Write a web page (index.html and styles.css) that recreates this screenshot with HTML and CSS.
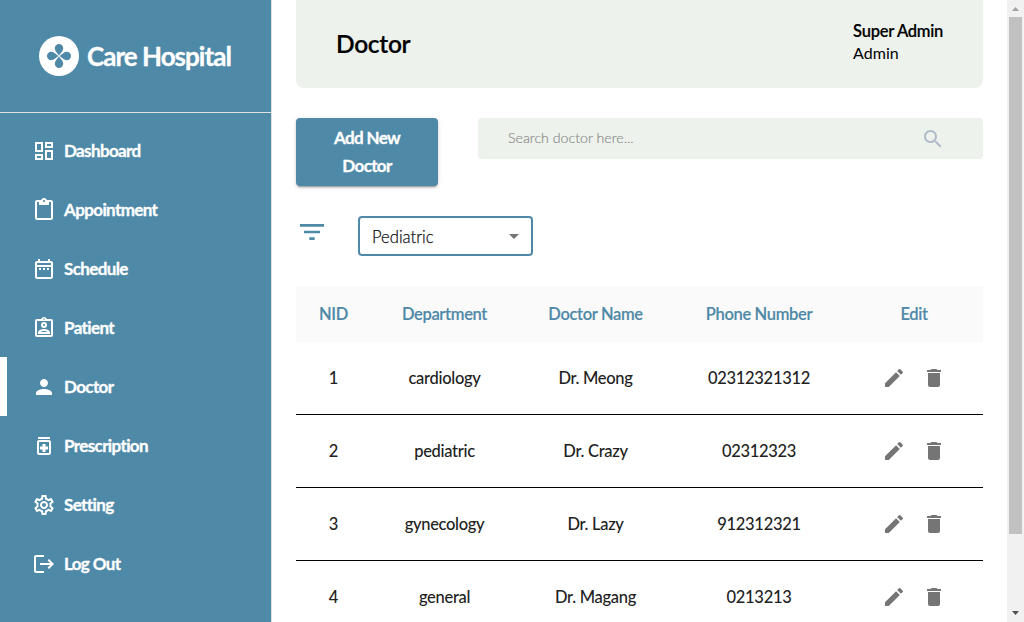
FILE: index.html
```html
<!DOCTYPE html>
<html lang="en">
<head>
<meta charset="utf-8">
<title>Care Hospital</title>
<link rel="stylesheet" href="styles.css">
</head>
<body>
<svg class="defs" aria-hidden="true">
  <symbol id="edit" viewBox="0 0 24 24"><path d="M3 17.25V21h3.75L17.81 9.94l-3.75-3.75L3 17.25zM20.71 7.04c.39-.39.39-1.02 0-1.41l-2.34-2.34a.9959.9959 0 0 0-1.41 0l-1.83 1.83 3.75 3.75 1.83-1.83z"/></symbol>
  <symbol id="trash" viewBox="0 0 24 24"><path d="M6 19c0 1.1.9 2 2 2h8c1.1 0 2-.9 2-2V7H6v12zM19 4h-3.5l-1-1h-5l-1 1H5v2h14V4z"/></symbol>
</svg>
<div class="app">
  <aside class="sidebar">
    <div class="brand">
      <svg class="logo" viewBox="0 0 40 40">
        <circle cx="20" cy="20" r="20" fill="#fff"/>
        <g fill="#4f89a8">
          <path id="petal" d="M20 19.500L16.900 15.500C16.200 14.600 15.800 13.500 15.800 12.200a4.200 4.200 0 0 1 8.400 0C24.200 13.500 23.800 14.600 23.100 15.500z"/>
          <use href="#petal" transform="rotate(90 20 20)"/>
          <use href="#petal" transform="rotate(180 20 20)"/>
          <use href="#petal" transform="rotate(270 20 20)"/>
        </g>
      </svg>
      <span class="brand-name">Care Hospital</span>
    </div>
    <nav class="nav">
      <a class="item"><svg class="icon" viewBox="0 0 24 24"><path d="M19 5v2h-4V5h4M9 5v6H5V5h4m10 8v6h-4v-6h4M9 17v2H5v-2h4M21 3h-8v6h8V3zM11 3H3v10h8V3zm10 8h-8v10h8V11zm-10 4H3v6h8v-6z"/></svg><span>Dashboard</span></a>
      <a class="item"><svg class="icon" viewBox="0 0 24 24"><path d="M19 2h-4.180C14.400.84 13.300 0 12 0S9.600.84 9.180 2H5c-1.100 0-2 .9-2 2v16c0 1.100.9 2 2 2h14c1.100 0 2-.9 2-2V4c0-1.100-.9-2-2-2zm-7 0c.55 0 1 .45 1 1s-.45 1-1 1-1-.45-1-1 .45-1 1-1zm7 18H5V4h2v3h10V4h2v16z"/></svg><span>Appointment</span></a>
      <a class="item"><svg class="icon" viewBox="0 0 24 24"><path d="M7 11h2v2H7v-2zm14-5v14c0 1.1-.9 2-2 2H5c-1.11 0-2-.9-2-2l.01-14c0-1.1.88-2 1.99-2h1V2h2v2h8V2h2v2h1c1.100 0 2 .9 2 2zM5 8h14V6H5v2zm14 12V10H5v10h14zm-4-7h2v-2h-2v2zm-4 0h2v-2h-2v2z"/></svg><span>Schedule</span></a>
      <a class="item"><svg class="icon" viewBox="0 0 24 24"><path fill-rule="evenodd" d="M5 3h4.180a3 3 0 0 1 5.640 0H19a2 2 0 0 1 2 2v14a2 2 0 0 1-2 2H5a2 2 0 0 1-2-2V5a2 2 0 0 1 2-2zm0 2v14h14V5zm7-2.750a.75.75 0 1 0 0 1.500.75.75 0 0 0 0-1.500zM12 6a3 3 0 1 1 0 6 3 3 0 0 1 0-6zm0 2a1 1 0 1 0 0 2 1 1 0 0 0 0-2zM6 16.470C6 13.970 9.970 12.890 12 12.890s6 1.080 6 3.580V18H6zm2.310-.47h7.380c-.69-.56-2.380-1.120-3.690-1.120S8.990 15.440 8.310 16z"/></svg><span>Patient</span></a>
      <a class="item active"><svg class="icon" viewBox="0 0 24 24"><path d="M12 12c2.210 0 4-1.790 4-4s-1.790-4-4-4-4 1.790-4 4 1.790 4 4 4zm0 2c-2.670 0-8 1.340-8 4v2h16v-2c0-2.660-5.330-4-8-4z"/></svg><span>Doctor</span></a>
      <a class="item"><svg class="icon" viewBox="0 0 24 24"><path d="M6 3h12v2H6zm11 3H7c-1.100 0-2 .9-2 2v11c0 1.100.9 2 2 2h10c1.100 0 2-.9 2-2V8c0-1.100-.9-2-2-2zm0 13H7V8h10v11zm-6.500-1h3v-2.500H16v-3h-2.500V10h-3v2.500H8v3h2.500z"/></svg><span>Prescription</span></a>
      <a class="item"><svg class="icon" viewBox="0 0 24 24"><path d="M19.43 12.98c.04-.32.07-.64.07-.98 0-.34-.03-.66-.07-.98l2.110-1.650c.19-.15.24-.42.12-.64l-2-3.460c-.09-.16-.26-.25-.44-.25-.06 0-.12.01-.17.03l-2.490 1c-.52-.4-1.080-.73-1.690-.98l-.38-2.650C14.460 2.180 14.250 2 14 2h-4c-.25 0-.46.18-.49.42l-.38 2.650c-.61.25-1.170.59-1.690.98l-2.490-1c-.06-.02-.12-.03-.18-.03-.17 0-.34.09-.43.25l-2 3.460c-.13.22-.07.49.12.64l2.110 1.650c-.04.32-.07.65-.07.98 0 .33.03.66.07.98l-2.110 1.650c-.19.15-.24.42-.12.64l2 3.460c.09.16.26.25.44.25.06 0 .12-.01.17-.03l2.490-1c.52.4 1.080.73 1.690.98l.38 2.650c.03.24.24.42.49.42h4c.25 0 .46-.18.49-.42l.38-2.650c.61-.25 1.170-.59 1.690-.98l2.490 1c.06.02.12.03.18.03.17 0 .34-.09.43-.25l2-3.460c.12-.22.07-.49-.12-.64l-2.110-1.650zm-1.980-1.710c.04.31.05.52.05.73 0 .21-.02.43-.05.73l-.14 1.130.89.7 1.080.84-.7 1.210-1.270-.51-1.040-.42-.9.68c-.43.32-.84.56-1.250.73l-1.060.43-.16 1.130-.2 1.350h-1.400l-.19-1.350-.16-1.130-1.060-.43c-.43-.18-.83-.41-1.230-.71l-.91-.7-1.060.43-1.270.51-.7-1.210 1.080-.84.89-.7-.14-1.130c-.03-.31-.05-.54-.05-.74s.02-.43.05-.73l.14-1.130-.89-.7-1.080-.84.7-1.210 1.270.51 1.040.42.9-.68c.43-.32.84-.56 1.250-.73l1.060-.43.16-1.130.2-1.350h1.390l.19 1.350.16 1.130 1.060.43c.43.18.83.41 1.230.71l.91.7 1.060-.43 1.270-.51.7 1.210-1.070.85-.89.7.14 1.130zM12 8c-2.210 0-4 1.790-4 4s1.790 4 4 4 4-1.790 4-4-1.790-4-4-4zm0 6c-1.100 0-2-.9-2-2s.9-2 2-2 2 .9 2 2-.9 2-2 2z"/></svg><span>Setting</span></a>
      <a class="item"><svg class="icon" viewBox="0 0 24 24"><path d="m17 7-1.410 1.410L18.170 11H8v2h10.170l-2.580 2.580L17 17l5-5zM4 5h8V3H4c-1.100 0-2 .9-2 2v14c0 1.100.9 2 2 2h8v-2H4V5z"/></svg><span>Log Out</span></a>
    </nav>
  </aside>
  <main class="main">
    <header class="header">
      <h1 class="title">Doctor</h1>
      <div class="user"><span class="user-name">Super Admin</span><span class="user-role">Admin</span></div>
    </header>
    <div class="actions">
      <button class="add"><span>Add New</span><span>Doctor</span></button>
      <div class="search"><span class="placeholder">Search doctor here...</span><svg class="icon" viewBox="0 0 24 24"><path d="M15.500 14h-.79l-.28-.27C15.410 12.590 16 11.110 16 9.500 16 5.910 13.090 3 9.500 3S3 5.910 3 9.500 5.910 16 9.500 16c1.610 0 3.090-.59 4.230-1.570l.27.28v.79l5 4.990L20.490 19l-4.990-5zm-6 0C7.010 14 5 11.990 5 9.500S7.010 5 9.500 5 14 7.010 14 9.500 11.990 14 9.500 14z"/></svg></div>
    </div>
    <div class="filters">
      <svg class="filter-icon" viewBox="0 0 24 24"><path d="M10 18h4v-2h-4v2zM3 6v2h18V6H3zm3 7h12v-2H6v2z"/></svg>
      <div class="select"><span>Pediatric</span><svg class="icon" viewBox="0 0 24 24"><path d="m7 10 5 5 5-5z"/></svg></div>
    </div>
    <div class="table">
      <div class="row head"><span>NID</span><span>Department</span><span>Doctor Name</span><span>Phone Number</span><span>Edit</span></div>
      <div class="row"><span>1</span><span>cardiology</span><span>Dr. Meong</span><span>02312321312</span><div class="tools"><svg class="icon"><use href="#edit"/></svg><svg class="icon"><use href="#trash"/></svg></div></div>
      <div class="row"><span>2</span><span>pediatric</span><span>Dr. Crazy</span><span>02312323</span><div class="tools"><svg class="icon"><use href="#edit"/></svg><svg class="icon"><use href="#trash"/></svg></div></div>
      <div class="row"><span>3</span><span>gynecology</span><span>Dr. Lazy</span><span>912312321</span><div class="tools"><svg class="icon"><use href="#edit"/></svg><svg class="icon"><use href="#trash"/></svg></div></div>
      <div class="row"><span>4</span><span>general</span><span>Dr. Magang</span><span>0213213</span><div class="tools"><svg class="icon"><use href="#edit"/></svg><svg class="icon"><use href="#trash"/></svg></div></div>
    </div>
  </main>
  <div class="scrollbar">
    <svg class="arrow up" viewBox="0 0 17 17"><path d="M5 11h7L8.500 7z"/></svg>
    <div class="thumb"></div>
    <svg class="arrow down" viewBox="0 0 17 17"><path d="M5 6h7L8.500 10z"/></svg>
  </div>
</div>
</body>
</html>
```
FILE: styles.css
```css
* { box-sizing: border-box; }
body {
  margin: 0;
  height: 622px;
  overflow: hidden;
  font-family: Lato, sans-serif;
  font-size: 16px;
  color: #000;
  background: #fff;
}
.defs { display: none; }
.icon { width: 24px; height: 24px; flex: none; fill: currentColor; }
.app { display: flex; height: 622px; overflow: hidden; }

.sidebar {
  flex: none;
  width: 272px;
  background: #4f89a8;
  border-right: 1px solid #e0e0e0;
  color: #fff;
}
.brand {
  display: flex;
  align-items: center;
  gap: 8px;
  height: 113px;
  padding-left: 39px;
  border-bottom: 1px solid #e0e0e0;
}
.logo { width: 40px; height: 40px; }
.brand-name { font-size: 26px; font-weight: 700; letter-spacing: -0.98px; -webkit-text-stroke: 0.3px; }
.nav { padding-top: 8px; }
.item {
  display: flex;
  align-items: center;
  gap: 8px;
  height: 59px;
  padding-left: 25px;
  border-left: 7px solid transparent;
  font-size: 17px;
  font-weight: 700;
  letter-spacing: -0.62px;
  -webkit-text-stroke: 0.3px;
}
.item.active { border-left-color: #fff; }

.main { flex: 1; min-width: 0; padding: 0 24px; }
.header {
  display: flex;
  align-items: center;
  justify-content: space-between;
  height: 88px;
  padding: 0 40px 1px;
  background: #edf2ec;
  border-radius: 0 0 8px 8px;
}
.title { margin: 0; font-size: 24.5px; font-weight: 600; letter-spacing: -0.3px; -webkit-text-stroke: 0.2px; }
.user { display: flex; flex-direction: column; padding-bottom: 4px; line-height: 22px; }
.user-name { font-size: 16.5px; font-weight: 600; letter-spacing: -0.28px; -webkit-text-stroke: 0.15px; }
.user-role { font-weight: 400; }

.actions {
  display: flex;
  align-items: flex-start;
  gap: 40px;
  margin-top: 30px;
}
.add {
  display: flex;
  flex-direction: column;
  align-items: center;
  justify-content: center;
  width: 142px;
  height: 68px;
  padding: 0;
  border: 0;
  border-radius: 4px;
  background: #4f89a8;
  color: #fff;
  font: 700 17px/28px Lato, sans-serif;
  letter-spacing: -0.62px;
  -webkit-text-stroke: 0.3px;
  box-shadow: 0 3px 1px -2px rgba(0,0,0,.2), 0 2px 2px rgba(0,0,0,.14), 0 1px 5px rgba(0,0,0,.12);
}
.search {
  flex: 1;
  display: flex;
  align-items: center;
  justify-content: space-between;
  height: 41px;
  padding: 0 38px 0 30px;
  border-radius: 4px;
  background: #edf2ec;
  color: #b0bbcb;
}
.placeholder { padding-bottom: 2px; color: #888; font-size: 14.2px; font-weight: 300; -webkit-text-stroke: 0.15px; }

.filters { display: flex; gap: 30px; margin-top: 30px; }
.filter-icon { width: 32px; height: 32px; fill: #4f89a8; }
.select {
  display: flex;
  align-items: center;
  justify-content: space-between;
  width: 175px;
  height: 40px;
  padding: 0 5px 0 12px;
  border: 2px solid #4f89a8;
  border-radius: 4px;
  color: #111;
  font-size: 16.6px;
  font-weight: 300;
}
.select span { padding-top: 2px; -webkit-text-stroke: 0.25px; }
.select .icon { color: #757575; }

.table { margin-top: 30px; }
.row {
  display: grid;
  grid-template-columns: 75px 147px 155px 172px 138px;
  align-items: center;
  height: 73px;
  border-bottom: 1px solid #000;
  text-align: center;
  font-size: 16.5px;
  font-weight: 500;
  letter-spacing: -0.3px;
  color: #212121;
}
.row.head {
  height: 56px;
  border-bottom: 0;
  background: #fafafa;
  color: #4f89a8;
  font-weight: 600;
  letter-spacing: -0.35px;
  -webkit-text-stroke: 0.15px;
}
.tools { display: flex; justify-content: center; gap: 16px; color: #757575; }

.scrollbar {
  display: flex;
  flex-direction: column;
  flex: none;
  width: 17px;
  background: #f1f1f1;
}
.arrow { width: 17px; height: 17px; flex: none; }
.up { fill: #a3a3a3; }
.down { margin-top: auto; fill: #505050; }
.thumb { height: 517px; margin: 0 2px; background: #c1c1c1; }
```
